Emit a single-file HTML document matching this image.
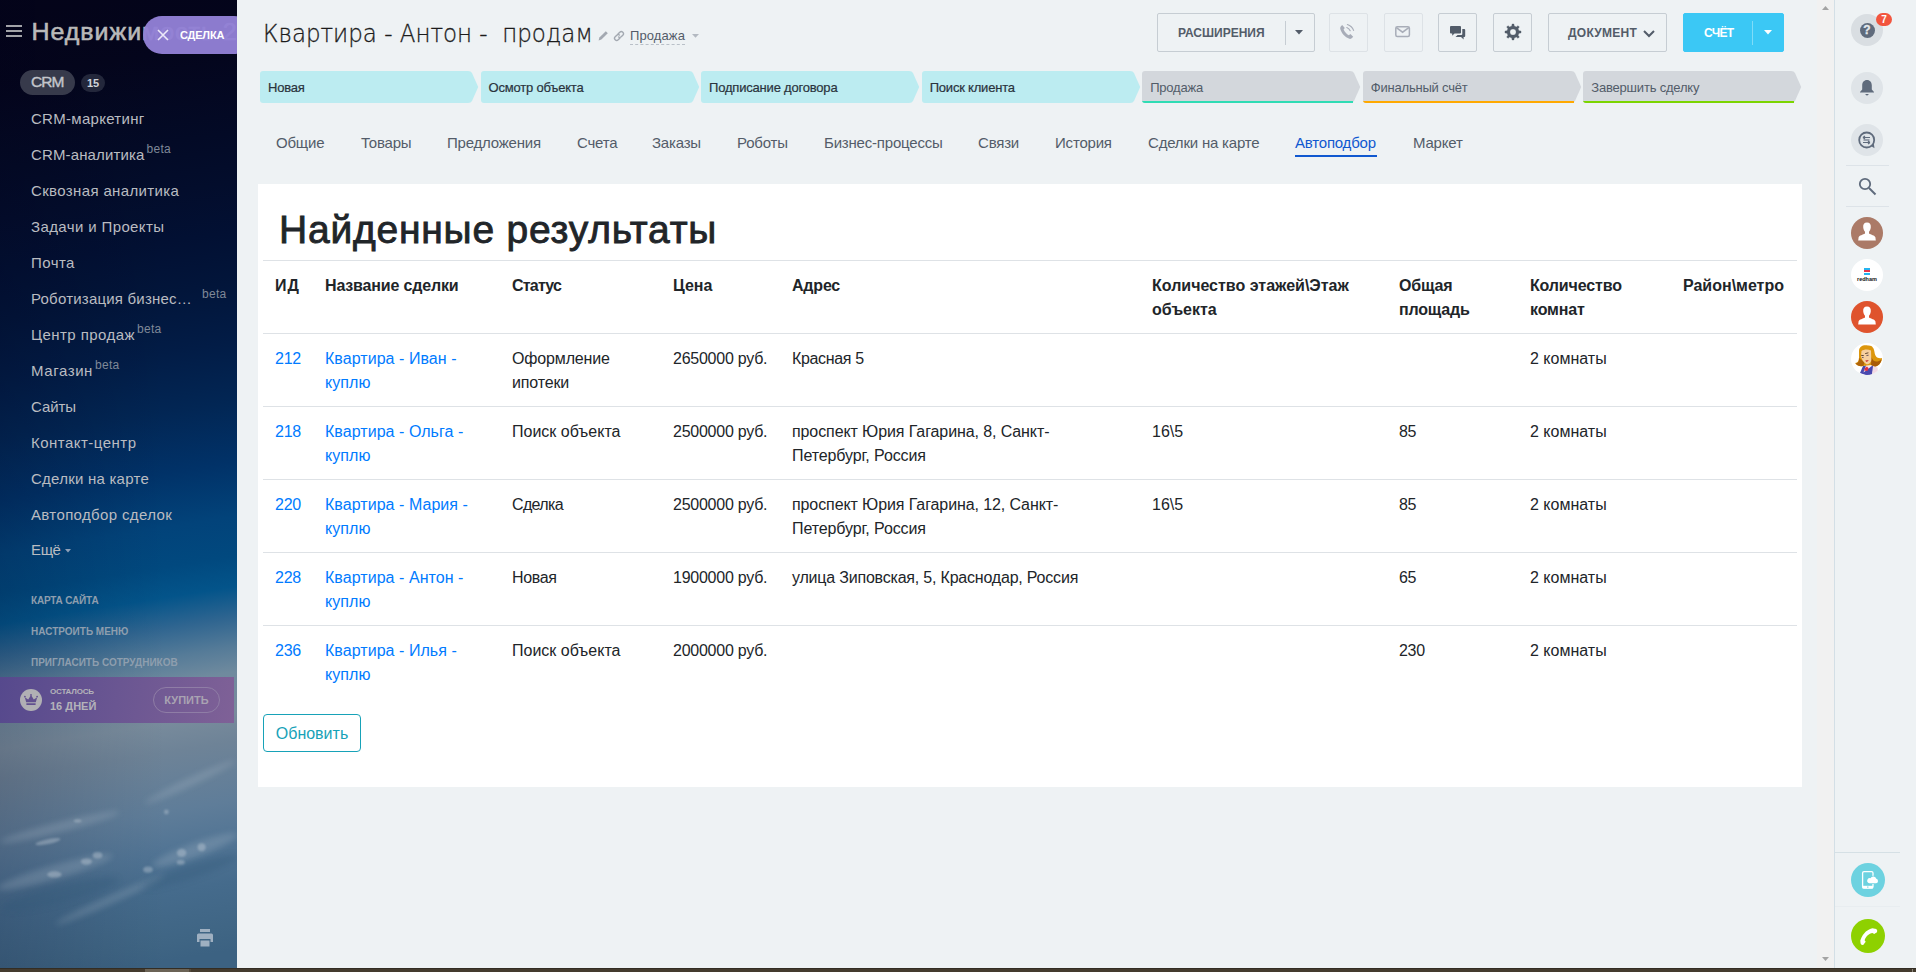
<!DOCTYPE html>
<html lang="ru">
<head>
<meta charset="utf-8">
<title>Квартира - Антон - продам</title>
<style>
*{box-sizing:border-box;margin:0;padding:0}
html,body{width:1916px;height:972px;overflow:hidden}
body{position:relative;background:#eef2f4;font-family:"Liberation Sans","DejaVu Sans",sans-serif;color:#333}
a{text-decoration:none;color:inherit}
.abs{position:absolute}
/* ---------- sidebar ---------- */
#side{position:absolute;left:0;top:0;width:237px;height:968px;overflow:hidden;
background:linear-gradient(171deg,#04041a 19px,#04051c 78px,#030a26 167px,#030d2c 216px,#021033 265px,#02153a 315px,#021c46 374px,#022654 433px,#013268 493px,#02437a 547px,#01497f 586px,#03548a 616px,#2f6590 646px,#557b98 675px,#6f8a9e 700px,#788b9c 740px,#6e8397 769px,#5f7d99 828px,#517494 868px,#456b8c 907px,#3f6584 957px,#3c6282 975px);}
#side .shade{position:absolute;left:0;top:0;width:237px;height:968px;background:linear-gradient(90deg,rgba(0,0,24,.16) 0,rgba(0,0,20,.05) 45%,rgba(0,0,0,0) 70%)}
#burger{position:absolute;left:6px;top:25px;width:16px;height:12px}
#burger i{position:absolute;left:0;width:16px;height:2px;background:#a2a3a8}
#logo{position:absolute;left:31.500px;top:14px;font-size:25px;font-weight:normal;color:#b9b9b9;white-space:nowrap;line-height:34px;letter-spacing:.95px;-webkit-text-stroke:.6px #b9b9b9;transform:scaleY(.925);transform-origin:0 25.7px}
#pill{position:absolute;left:143px;top:16px;width:110px;height:38px;border-radius:19px;background:rgba(146,128,213,.96)}
#pill .t{position:absolute;left:37px;top:12px;font-size:11px;font-weight:bold;color:#fff;letter-spacing:-.2px;line-height:14px}
.menu a{position:absolute;left:31px;font-size:15px;color:#babcc1;white-space:nowrap;line-height:20px}
.menu sup{font-size:12px;color:#7f8898;position:relative;top:-2px;vertical-align:top;line-height:12px;margin-left:2px;letter-spacing:.3px}
.small a{position:absolute;left:31px;font-size:10px;font-weight:bold;color:#8e9eae;white-space:nowrap;line-height:14px}
#bottombar{position:absolute;left:0;top:968px;width:1916px;height:4px;background:#443b2e;border-top:1px solid #332d24}
/* ---------- right panel ---------- */
#rp{position:absolute;left:1834px;top:0;width:82px;height:968px;border-left:1px solid #d3dfe6;background:#eef2f4}
#sb{position:absolute;left:1817px;top:0;width:17px;height:968px;background:#f1f1f1}
.circ{position:absolute;border-radius:50%}
/* ---------- main ---------- */
#title{position:absolute;left:263px;top:15.7px;font-family:"DejaVu Sans","Liberation Sans",sans-serif;font-weight:200;font-size:24px;line-height:36px;color:#1c1c1c;white-space:pre;transform:scaleX(.956);transform-origin:0 0;-webkit-text-stroke:.3px #1c1c1c}

/* header buttons */
.btn{position:absolute;top:13px;height:39px;border:1px solid #c6cdd3;border-radius:2px;font-size:12px;font-weight:bold;color:#535c69;line-height:37px;white-space:nowrap}
.btn.dis{border-color:#dde2e6}
.btn span{position:absolute;top:1px}
/* stages */
.stage{position:absolute;top:71px;height:32px;width:219px}
.stage span{position:absolute;left:8px;top:9px;font-size:13px;line-height:16px;white-space:nowrap;letter-spacing:-.2px;-webkit-text-stroke:.2px currentColor}
/* tabs */
.tabs a{position:absolute;top:133px;font-size:15px;line-height:20px;color:#535c69;white-space:nowrap;letter-spacing:-.2px}
.tabs a.act{color:#1058d0}
/* panel */
#panel{position:absolute;left:258px;top:184px;width:1544px;height:603px;background:#fff}
#h1{position:absolute;left:279px;top:206px;font-size:39px;line-height:48px;color:#212529;white-space:nowrap;font-weight:normal;letter-spacing:.78px;-webkit-text-stroke:.85px #212529}
table{position:absolute;left:263px;top:260px;width:1534px;border-collapse:collapse;table-layout:fixed;font-size:16px;line-height:24px;color:#212529}
th,td{padding:13px 12px 11px 12px;text-align:left;vertical-align:top;border-top:1px solid #dee2e6;height:73px;overflow:hidden}
th{font-weight:bold}
td a{color:#007bff;letter-spacing:.05px}
td.pr{white-space:nowrap;letter-spacing:-.25px}
td.ad{letter-spacing:-.1px}
#upd{position:absolute;left:263px;top:714px;width:98px;height:38px;border:1px solid #17a2b8;border-radius:4px;color:#17a2b8;font-size:16px;line-height:37.500px;text-align:center}
</style>
</head>
<body>
<div id="side">
<div class="shade"></div>
<svg class="abs" style="left:0;top:722px" width="237" height="246" viewBox="0 0 237 246"><defs><filter id="bl" x="-20%" y="-50%" width="140%" height="200%"><feGaussianBlur stdDeviation="3"/></filter><filter id="bl2" x="-20%" y="-50%" width="140%" height="200%"><feGaussianBlur stdDeviation="1.6"/></filter></defs>
<g filter="url(#bl)" fill="#c9d3dc" opacity=".2"><ellipse cx="60" cy="105" rx="62" ry="5" transform="rotate(-14 60 105)"/><ellipse cx="190" cy="60" rx="50" ry="4" transform="rotate(-25 190 60)"/><ellipse cx="55" cy="150" rx="60" ry="7" transform="rotate(-16 55 150)"/><ellipse cx="195" cy="128" rx="45" ry="7" transform="rotate(-20 195 128)"/><ellipse cx="110" cy="178" rx="60" ry="4" transform="rotate(-24 110 178)"/></g>
<g filter="url(#bl2)" fill="#d5dde4" opacity=".34" transform="translate(24 30) scale(.8)"><ellipse cx="38" cy="153" rx="9" ry="4"/><ellipse cx="78" cy="137" rx="7" ry="4"/><ellipse cx="92" cy="129" rx="6" ry="4"/><ellipse cx="197" cy="126" rx="6" ry="5"/><ellipse cx="222" cy="119" rx="5" ry="5"/><ellipse cx="196" cy="138" rx="5" ry="3"/><ellipse cx="155" cy="147" rx="6" ry="4"/><ellipse cx="67" cy="86" rx="5" ry="2"/><ellipse cx="178" cy="75" rx="3" ry="3"/><ellipse cx="30" cy="112" rx="16" ry="3" transform="rotate(-12 30 112)"/></g>
<g filter="url(#bl)" fill="#2f5677" opacity=".3"><ellipse cx="60" cy="172" rx="60" ry="9" transform="rotate(-14 60 172)"/><ellipse cx="190" cy="150" rx="50" ry="7" transform="rotate(-18 190 150)"/></g>
</svg>
<svg class="abs" style="left:197px;top:929px" width="16" height="18" viewBox="0 0 16 18"><path d="M3 0H13V3H3ZM1.5 4.5H14.5Q16 4.5 16 6V13H13.5V10H2.5V13H0V6Q0 4.500 1.5 4.500ZM3.500 11.500H12.500V17.500H3.500Z" fill="#9fb0c1"/></svg>

<div id="burger"><i style="top:0"></i><i style="top:5px"></i><i style="top:10px"></i></div>
<div id="logo">Недвижимость 24</div>
<div id="pill"><svg class="abs" style="left:14px;top:13px" width="12" height="12" viewBox="0 0 12 12"><path d="M1 1L11 11M11 1L1 11" stroke="#ece8f8" stroke-width="1.600" fill="none"/></svg><span class="t">СДЕЛКА</span></div>
<div class="menu">
<div class="abs" style="left:20px;top:70px;width:55px;height:25px;border-radius:13px;background:#373a4b"></div><a style="left:31px;top:71.700px;color:#c3c5cb;letter-spacing:-1px;font-size:15.500px;-webkit-text-stroke:.4px #c3c5cb">CRM</a>
<div class="abs" style="left:81px;top:74px;width:24px;height:18px;border-radius:9px;background:#23273b;color:#d0d3da;font-size:11px;font-weight:bold;line-height:18px;text-align:center">15</div>
<a style="top:109px;letter-spacing:0.29px">CRM-маркетинг</a>
<a style="top:145px;letter-spacing:0.13px">CRM-аналитика<sup>beta</sup></a>
<a style="top:181px;letter-spacing:0.36px">Сквозная аналитика</a>
<a style="top:217px;letter-spacing:0.38px">Задачи и Проекты</a>
<a style="top:253px;letter-spacing:0.45px">Почта</a>
<a style="top:289px;letter-spacing:0.21px">Роботизация бизнес…</a>
<a style="top:325px;letter-spacing:0.44px">Центр продаж<sup>beta</sup></a>
<a style="top:361px;letter-spacing:0.59px">Магазин<sup>beta</sup></a>
<a style="top:397px;letter-spacing:-0.07px">Сайты</a>
<a style="top:433px;letter-spacing:0.48px">Контакт-центр</a>
<a style="top:469px;letter-spacing:0.24px">Сделки на карте</a>
<a style="top:505px;letter-spacing:0.36px">Автоподбор сделок</a>
<span class="abs" style="left:202px;top:288px;font-size:12px;color:#7f8898;line-height:12px;letter-spacing:.3px">beta</span>
<a style="top:540px;letter-spacing:-0.37px">Ещё</a><svg class="abs" style="left:65px;top:549px" width="6" height="4" viewBox="0 0 6 4"><path d="M0 0H6L3 3.5Z" fill="#8fa0b8"/></svg>
</div>
<div class="small"><a style="top:594px;letter-spacing:-.18px">КАРТА САЙТА</a><a style="top:625px">НАСТРОИТЬ МЕНЮ</a><a style="top:656px">ПРИГЛАСИТЬ СОТРУДНИКОВ</a></div>
<div class="abs" id="lic" style="left:0;top:677px;width:234px;height:46px;background:linear-gradient(100deg,#56498d 0%,#6a5692 50%,#7f6197 100%)">
<div class="circ" style="left:20px;top:12px;width:22px;height:22px;background:#b1b0b4"></div>
<svg class="abs" style="left:24px;top:17px" width="14" height="12" viewBox="0 0 14 12"><path d="M2.200 8.300L0.800 3.200L4.200 5.400L7 1L9.800 5.400L13.200 3.200L11.800 8.300ZM2.400 9.300H11.600V11H2.400Z" fill="#62508f"/><circle cx="0.900" cy="2.600" r=".9" fill="#62508f"/><circle cx="7" cy="0.900" r=".9" fill="#62508f"/><circle cx="13.100" cy="2.600" r=".9" fill="#62508f"/></svg>
<span class="abs" style="left:50px;top:9px;font-size:8px;font-weight:bold;color:#b4b3ba;line-height:12px;white-space:nowrap;letter-spacing:-.2px">ОСТАЛОСЬ</span>
<span class="abs" style="left:50px;top:22px;font-size:11px;font-weight:bold;color:#b4b3ba;line-height:14px;white-space:nowrap">16 ДНЕЙ</span>
<div class="abs" style="left:153px;top:10px;width:67px;height:26px;border:1px solid #8f7da6;border-radius:13px;color:#a9a3b2;font-size:11px;font-weight:bold;line-height:24px;text-align:center">КУПИТЬ</div>
</div>
</div>
<div id="bottombar"><i class="abs" style="left:145px;top:0;width:44px;height:4px;background:#6b6356"></i><i class="abs" style="left:189px;top:0;width:2px;height:4px;background:#54493b"></i><i class="abs" style="left:1912px;top:0;width:1px;height:4px;background:#8d877b"></i></div>
<div id="sb"></div>
<div id="rp"></div>

<div class="btn" style="left:1157px;width:158px"><span style="left:20px">РАСШИРЕНИЯ</span><i class="abs" style="left:127px;top:7px;width:1px;height:24px;background:#c6cdd3"></i><svg class="abs" style="left:137px;top:16px" width="8" height="4.500" viewBox="0 0 9 5"><path d="M0 0H9L4.5 5Z" fill="#535c69"/></svg></div>
<div class="btn dis" style="left:1329px;width:39px" id="b-phone"><svg class="abs" style="left:-1px;top:-1px" width="39" height="39" viewBox="0 0 39 39"><path d="M13.2 12C12.2 12.8 11 14 11.2 15.6C11.8 19.6 16.2 24.6 20.4 25.8C21.8 26.2 23.2 25 24.2 23.8L21.4 21L19.8 22.2C17.6 21 15.6 18.8 14.6 16.4L15.8 15Z" fill="#a8adb8"/><path d="M17.8 14.5Q20.2 15.4 21.2 17.8" stroke="#a8adb8" stroke-width="1.1" fill="none" stroke-linecap="round"/><path d="M18.4 11.6Q23 13.2 24.6 17.4" stroke="#a8adb8" stroke-width="1.1" fill="none" stroke-linecap="round"/></svg></div>
<div class="btn dis" style="left:1384px;width:39px" id="b-mail"><svg class="abs" style="left:-1px;top:-1px" width="39" height="39" viewBox="0 0 39 39"><rect x="11.8" y="13.8" width="13.6" height="9.6" rx="1.5" fill="none" stroke="#a8adb8" stroke-width="1.5"/><path d="M12.4 14.6L18.6 19.2L24.8 14.6" fill="none" stroke="#a8adb8" stroke-width="1.5"/></svg></div>
<div class="btn" style="left:1438px;width:39px" id="b-chat"><svg class="abs" style="left:-1px;top:-1px" width="39" height="39" viewBox="0 0 39 39"><path d="M13 13H22Q23 13 23 14V19.5Q23 20.5 22 20.5H16.5L14.2 22.8V20.5H13Q12 20.5 12 19.5V14Q12 13 13 13Z" fill="#525c69"/><path d="M24.3 16H26.2Q27.2 16 27.2 17V23Q27.2 24 26.2 24H25.6V26.4L23 24H17.5L19.6 21.9H23.3Q24.3 21.9 24.3 20.9Z" fill="#525c69"/></svg></div>
<div class="btn" style="left:1493px;width:39px" id="b-gear"><svg class="abs" style="left:-1px;top:-1px" width="39" height="39" viewBox="0 0 39 39"><path fill-rule="evenodd" d="M18.76 13.03 L19.05 10.96 L20.95 10.96 L21.24 13.03 L23.35 13.90 L25.01 12.64 L26.36 13.99 L25.10 15.65 L25.97 17.76 L28.04 18.05 L28.04 19.95 L25.97 20.24 L25.10 22.35 L26.36 24.01 L25.01 25.36 L23.35 24.10 L21.24 24.97 L20.95 27.04 L19.05 27.04 L18.76 24.97 L16.65 24.10 L14.99 25.36 L13.64 24.01 L14.90 22.35 L14.03 20.24 L11.96 19.95 L11.96 18.05 L14.03 17.76 L14.90 15.65 L13.64 13.99 L14.99 12.64 L16.65 13.90Z M23.100 19A3.100 3.100 0 1 0 16.900 19A3.100 3.100 0 1 0 23.100 19Z" fill="#525c69" stroke="#525c69" stroke-width=".3" stroke-linejoin="round"/></svg></div>
<div class="btn" style="left:1548px;width:119px"><span style="left:19px;letter-spacing:.25px">ДОКУМЕНТ</span><svg class="abs" style="left:94px;top:15.500px" width="12" height="8" viewBox="0 0 12 8"><path d="M1 1L6 6L11 1" stroke="#535c69" stroke-width="2" fill="none"/></svg></div>
<div class="btn" style="left:1683px;width:101px;background:#3bc8f5;border-color:#3bc8f5;color:#fff"><span style="left:20px;letter-spacing:-.7px">СЧЁТ</span><i class="abs" style="left:68px;top:7px;width:1px;height:24px;background:#7fdcf8"></i><svg class="abs" style="left:80px;top:16px" width="8" height="4.500" viewBox="0 0 9 5"><path d="M0 0H9L4.5 5Z" fill="#fff"/></svg></div>
<div class="stage" style="left:260.00px"><svg class="abs" style="left:0;top:0" width="219" height="32" viewBox="0 0 219 32"><path d="M3 0H208Q211 0 212 2L218.200 16L212 30Q211 32 208 32H3Q0 32 0 29V3Q0 0 3 0Z" fill="#bcecf1"/></svg><span style="color:#2a333d">Новая</span></div>
<div class="stage" style="left:480.55px"><svg class="abs" style="left:0;top:0" width="219" height="32" viewBox="0 0 219 32"><path d="M3 0H208Q211 0 212 2L218.200 16L212 30Q211 32 208 32H3Q0 32 0 29V3Q0 0 3 0Z" fill="#bcecf1"/></svg><span style="color:#2a333d">Осмотр объекта</span></div>
<div class="stage" style="left:701.10px"><svg class="abs" style="left:0;top:0" width="219" height="32" viewBox="0 0 219 32"><path d="M3 0H208Q211 0 212 2L218.200 16L212 30Q211 32 208 32H3Q0 32 0 29V3Q0 0 3 0Z" fill="#bcecf1"/></svg><span style="color:#2a333d">Подписание договора</span></div>
<div class="stage" style="left:921.65px"><svg class="abs" style="left:0;top:0" width="219" height="32" viewBox="0 0 219 32"><path d="M3 0H208Q211 0 212 2L218.200 16L212 30Q211 32 208 32H3Q0 32 0 29V3Q0 0 3 0Z" fill="#bcecf1"/></svg><span style="color:#2a333d">Поиск клиента</span></div>
<div class="stage" style="left:1142.20px"><svg class="abs" style="left:0;top:0" width="219" height="32" viewBox="0 0 219 32"><path d="M3 0H208Q211 0 212 2L218.200 16L212 30Q211 32 208 32H3Q0 32 0 29V3Q0 0 3 0Z" fill="#d3d7dc"/><path d="M0 30H211V32H3Q0 32 0 29Z" fill="#2fdcb4"/></svg><span style="color:#525c69;-webkit-text-stroke:0">Продажа</span></div>
<div class="stage" style="left:1362.75px"><svg class="abs" style="left:0;top:0" width="219" height="32" viewBox="0 0 219 32"><path d="M3 0H208Q211 0 212 2L218.200 16L212 30Q211 32 208 32H3Q0 32 0 29V3Q0 0 3 0Z" fill="#d3d7dc"/><path d="M0 30H211V32H3Q0 32 0 29Z" fill="#ffa900"/></svg><span style="color:#525c69;-webkit-text-stroke:0">Финальный счёт</span></div>
<div class="stage" style="left:1583.30px"><svg class="abs" style="left:0;top:0" width="219" height="32" viewBox="0 0 219 32"><path d="M3 0H208Q211 0 212 2L218.200 16L212 30Q211 32 208 32H3Q0 32 0 29V3Q0 0 3 0Z" fill="#d3d7dc"/><path d="M0 30H211V32H3Q0 32 0 29Z" fill="#7bd500"/></svg><span style="color:#525c69;-webkit-text-stroke:0">Завершить сделку</span></div>
<div class="tabs"><a style="left:276px">Общие</a><a style="left:361px">Товары</a><a style="left:447px">Предложения</a><a style="left:577px">Счета</a><a style="left:652px">Заказы</a><a style="left:737px">Роботы</a><a style="left:824px">Бизнес-процессы</a><a style="left:978px">Связи</a><a style="left:1055px">История</a><a style="left:1148px">Сделки на карте</a><a class="act" style="left:1295px">Автоподбор</a><a style="left:1413px">Маркет</a><div class="abs" style="left:1295px;top:155px;width:82px;height:2px;background:#1058d0"></div></div>

<div id="panel"></div>
<div id="h1">Найденные результаты</div>
<table><colgroup><col style="width:50px"><col style="width:187px"><col style="width:161px"><col style="width:119px"><col style="width:360px"><col style="width:247px"><col style="width:131px"><col style="width:153px"><col style="width:126px"></colgroup>
<thead><tr><th><span style="letter-spacing:1.0px">ИД</span></th><th><span style="letter-spacing:-0.16px">Название сделки</span></th><th><span style="letter-spacing:-0.8px">Статус</span></th><th>Цена</th><th><span style="letter-spacing:-0.2px">Адрес</span></th><th>Количество этажей\Этаж<br>объекта</th><th><span style="letter-spacing:-0.18px">Общая<br>площадь</span></th><th><span style="letter-spacing:-0.15px">Количество<br>комнат</span></th><th>Район\метро</th></tr></thead>
<tbody>
<tr><td><a><span style="letter-spacing:-0.23px">212</span></a></td><td><a>Квартира - Иван -<br>куплю</a></td><td><span style="letter-spacing:-0.15px">Оформление<br>ипотеки</span></td><td class="pr">2650000 руб.</td><td class="ad"><span style="letter-spacing:-0.34px">Красная 5</span></td><td></td><td></td><td>2 комнаты</td><td></td></tr>
<tr><td><a><span style="letter-spacing:-0.23px">218</span></a></td><td><a>Квартира - Ольга -<br>куплю</a></td><td>Поиск объекта</td><td class="pr">2500000 руб.</td><td class="ad">проспект Юрия Гагарина, 8, Санкт-<br>Петербург, Россия</td><td>16\5</td><td><span style="letter-spacing:-0.5px">85</span></td><td>2 комнаты</td><td></td></tr>
<tr><td><a><span style="letter-spacing:-0.23px">220</span></a></td><td><a>Квартира - Мария -<br>куплю</a></td><td><span style="letter-spacing:-0.64px">Сделка</span></td><td class="pr">2500000 руб.</td><td class="ad">проспект Юрия Гагарина, 12, Санкт-<br>Петербург, Россия</td><td>16\5</td><td><span style="letter-spacing:-0.5px">85</span></td><td>2 комнаты</td><td></td></tr>
<tr><td><a><span style="letter-spacing:-0.23px">228</span></a></td><td><a>Квартира - Антон -<br>куплю</a></td><td><span style="letter-spacing:-0.33px">Новая</span></td><td class="pr">1900000 руб.</td><td class="ad"><span style="letter-spacing:-0.2px">улица Зиповская, 5, Краснодар, Россия</span></td><td></td><td><span style="letter-spacing:-0.5px">65</span></td><td>2 комнаты</td><td></td></tr>
<tr><td><a><span style="letter-spacing:-0.23px">236</span></a></td><td><a>Квартира - Илья -<br>куплю</a></td><td>Поиск объекта</td><td class="pr">2000000 руб.</td><td class="ad"></td><td></td><td><span style="letter-spacing:-0.3px">230</span></td><td>2 комнаты</td><td></td></tr>
</tbody></table>

<div id="upd">Обновить</div>

<svg class="abs" style="left:1822px;top:6px" width="7" height="4" viewBox="0 0 9 5"><path d="M4.5 0L9 5H0Z" fill="#a3a3a3"/></svg>
<svg class="abs" style="left:1822px;top:957px" width="7" height="4" viewBox="0 0 9 5"><path d="M0 0H9L4.5 5Z" fill="#a3a3a3"/></svg>
<div class="circ" style="left:1851px;top:14px;width:32px;height:32px;background:#d9dee2"></div>
<div class="circ" style="left:1859.5px;top:22.5px;width:15px;height:15px;background:#5f6b7c;color:#e6eaed;font-size:12px;font-weight:bold;line-height:15.500px;text-align:center;-webkit-text-stroke:.3px #e6eaed">?</div>
<div class="abs" style="left:1876px;top:13px;width:16px;height:13px;border-radius:7px;background:#f2553e;color:#fff;font-size:10px;font-weight:bold;line-height:13px;text-align:center">7</div>
<div class="circ" style="left:1851px;top:72px;width:32px;height:32px;background:#dfe4e8"></div>
<svg class="abs" style="left:1859px;top:79px" width="16" height="18" viewBox="0 0 16 18"><path d="M8 1C5 1 3.2 3.4 3.2 6.2V10.5L1 13V13.6H15V13L12.8 10.5V6.2C12.8 3.4 11 1 8 1ZM6 15H10L8 16.8Z" fill="#5f6b7c"/></svg>
<div class="circ" style="left:1851px;top:124px;width:32px;height:32px;background:#dfe4e8"></div>
<svg class="abs" style="left:1857px;top:130px" width="20" height="20" viewBox="0 0 20 20"><circle cx="9.700" cy="10" r="7.500" fill="none" stroke="#5f6b7c" stroke-width="1.800"/><path d="M14 16L17.500 18.200L16.800 13.500Z" fill="#5f6b7c"/><path d="M6 7.5H13M6 12.5H13M6 7.5L8 6M6 7.5L8 9M13 12.5L11 11M13 12.5L11 14" stroke="#5f6b7c" stroke-width="1.1" fill="none"/><path d="M6.5 10H12.5" stroke="#5f6b7c" stroke-width="1.1"/></svg>
<div class="abs" style="left:1846px;top:165px;width:43px;height:1px;background:#dde3e8"></div>
<svg class="abs" style="left:1857px;top:176px" width="20" height="20" viewBox="0 0 20 20"><circle cx="8" cy="8" r="5.2" fill="none" stroke="#5f6b7c" stroke-width="1.8"/><path d="M12 12L18.5 18.5" stroke="#5f6b7c" stroke-width="2"/></svg>
<div class="abs" style="left:1846px;top:206px;width:43px;height:1px;background:#dde3e8"></div>
<div class="circ" style="left:1851px;top:217px;width:32px;height:32px;background:#ab7a67;overflow:hidden"><svg class="abs" style="left:0;top:0" width="32" height="32" viewBox="0 0 32 32"><path d="M16 5.5C13.2 5.5 12 7.6 12.2 10.2C12.4 12.6 13.2 13.8 14 14.8V16.4C12 17.6 8.2 18.4 7.6 20.2L7.2 23.6H24.8L24.4 20.2C23.8 18.4 20 17.6 18 16.4V14.8C18.8 13.8 19.6 12.6 19.8 10.2C20 7.6 18.8 5.5 16 5.5Z" fill="#fff"/></svg></div>
<div class="circ" style="left:1851px;top:259px;width:32px;height:32px;background:#fff"></div>
<div class="abs" style="left:1864px;top:267.5px;width:6px;height:2px;background:#25b4f0"></div><div class="abs" style="left:1864px;top:270px;width:6px;height:2px;background:#e8384a"></div><div class="abs" style="left:1864px;top:272.5px;width:6px;height:2px;background:#25b4f0"></div>
<div class="abs" style="left:1851px;top:276px;width:32px;text-align:center;font-size:5.5px;font-weight:bold;color:#111;line-height:7px">redham</div>
<div class="circ" style="left:1851px;top:301px;width:32px;height:32px;background:#df532d;overflow:hidden"><svg class="abs" style="left:0;top:0" width="32" height="32" viewBox="0 0 32 32"><path d="M16 5.5C13.2 5.5 12 7.6 12.2 10.2C12.4 12.6 13.2 13.8 14 14.8V16.4C12 17.6 8.2 18.4 7.6 20.2L7.2 23.6H24.8L24.4 20.2C23.8 18.4 20 17.6 18 16.4V14.8C18.8 13.8 19.6 12.6 19.8 10.2C20 7.6 18.8 5.5 16 5.5Z" fill="#fff"/></svg></div>
<div class="circ" style="left:1851px;top:343px;width:32px;height:32px;background:#fff;overflow:hidden" id="av4"><svg class="abs" style="left:0;top:0" width="32" height="32" viewBox="0 0 32 32"><path d="M12 23L9 30L16 32.5L21 31.5L23 23L20 21Z" fill="#4848ae"/><path d="M22 23L26.5 24.5L27 30L21 31.5Z" fill="#f3dbe4"/><path d="M15.5 21L12.5 29.5L21.5 22.5L20 20Z" fill="#f7e6ee"/><path d="M14 25L16 23.6L17.6 25.2L16.4 28L13.2 27.4Z" fill="#e03040"/><path d="M8 8C8 3 13 1.3 17 2.5C21 2 23 5 23.5 9C24 13 26 16 31 15C31 19 28 23 24 23.5L20 22L12 23C9 24 5 22 4.2 20C7 20 8 17 8 14Z" fill="#dc960c"/><path d="M20.5 14C22 19 26 20 30.5 16.5C30 20 27.5 23 24 23.5L20 22Z" fill="#a85a08"/><path d="M8 15C8.5 19 6.5 20.5 4.5 20.2C6 22.5 9.5 23.8 12.5 22.8L13.5 19Z" fill="#b0640a"/><path d="M10.5 8C13 6 17 6 20 7.5L20.3 17C20 20 17 21.8 15.5 21.2C12 19 10.5 16 10 13Z" fill="#f6cf9f"/><path d="M14.4 17.6Q16.2 17.2 17.8 17.2Q16.6 19 15 18.6Z" fill="#c0101a"/><path d="M10.2 12.4L12.8 12.6M14.2 10.6L17.4 9.8" stroke="#3a2412" stroke-width=".8"/><path d="M11 14.4L12.6 14.6M15.4 12.6L17.6 12.2" stroke="#5a4a5a" stroke-width=".9"/></svg></div>
<div class="abs" style="left:1835px;top:852px;width:65px;height:1px;background:#d5e0e5"></div>
<div class="circ" style="left:1851px;top:863px;width:34px;height:34px;background:#6dd2e0"><svg class="abs" style="left:0;top:0" width="34" height="34" viewBox="0 0 34 34"><rect x="11.600" y="8.600" width="10.400" height="16.600" rx="1.400" fill="none" stroke="#fff" stroke-width="1.300"/><rect x="11.600" y="22.800" width="10.400" height="2.600" fill="#fff"/><rect x="16.200" y="23.500" width="1.200" height="1.200" fill="#6dd2e0"/><g stroke="#6dd2e0" stroke-width="1.600" fill="#fff"><path d="M18.200 20.300H25A2.300 2.300 0 0 0 25.300 15.800A3.100 3.100 0 0 0 19.500 15.200A2.600 2.600 0 0 0 18.200 20.300Z"/></g><path d="M18.200 20.300H25A2.300 2.300 0 0 0 25.300 15.800A3.100 3.100 0 0 0 19.500 15.200A2.600 2.600 0 0 0 18.200 20.300Z" fill="#fff"/></svg></div>
<div class="abs" style="left:1835px;top:906px;width:65px;height:1px;background:#e8edf0"></div>
<div class="circ" style="left:1851px;top:919px;width:34px;height:34px;background:#8ed100"><svg class="abs" style="left:0;top:0" width="34" height="34" viewBox="0 0 34 34"><path d="M21.400 9.300C17 10.500 12.500 13 9.300 21.400L9.600 24.500Q10.500 26.400 12.200 26L14.700 22.800L13.600 21.200C15 17.500 18 14.600 21.500 14.100L23.200 15.100L26 13.200Q26.800 11.400 25.300 10.100Z" fill="#fff"/></svg></div>
<svg class="abs" style="left:598px;top:30px" width="11" height="11" viewBox="0 0 11 11"><path d="M0.600 10.400L1.400 7.600L7.800 1.200L9.800 3.200L3.400 9.600Z" fill="#a3a9b1"/></svg>
<svg class="abs" style="left:613px;top:30px" width="12" height="12" viewBox="0 0 12 12"><g fill="none" stroke="#a3a9b1" stroke-width="1.4" stroke-linecap="round"><path d="M5.200 3.800L6.800 2.200A2.100 2.100 0 0 1 9.800 5.200L8.200 6.800A2.100 2.100 0 0 1 5.600 7"/><path d="M6.800 8.200L5.200 9.800A2.100 2.100 0 0 1 2.200 6.800L3.800 5.200A2.100 2.100 0 0 1 6.400 5"/></g></svg>
<div class="abs" style="left:630px;top:27px;font-size:13px;line-height:17px;color:#535c69;white-space:nowrap;border-bottom:1px dashed #b9c0c8;letter-spacing:.1px">Продажа</div>
<svg class="abs" style="left:692px;top:34px" width="7" height="4" viewBox="0 0 7 4"><path d="M0 0H7L3.500 3.800Z" fill="#b3b9c1"/></svg>
<div id="title">Квартира - Антон -  продам</div>
</body>
</html>
